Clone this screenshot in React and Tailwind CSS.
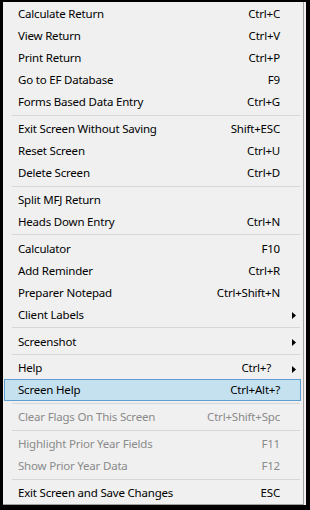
import React from "react";

const items = [
    { label: "Calculate Return", key: "Ctrl+C" },
    { label: "View Return", key: "Ctrl+V" },
    { label: "Print Return", key: "Ctrl+P" },
    { label: "Go to EF Database", key: "F9" },
    { label: "Forms Based Data Entry", key: "Ctrl+G" },
    { sep: true },
    { label: "Exit Screen Without Saving", key: "Shift+ESC" },
    { label: "Reset Screen", key: "Ctrl+U" },
    { label: "Delete Screen", key: "Ctrl+D" },
    { sep: true },
    { label: "Split MFJ Return", key: "" },
    { label: "Heads Down Entry", key: "Ctrl+N" },
    { sep: true },
    { label: "Calculator", key: "F10" },
    { label: "Add Reminder", key: "Ctrl+R" },
    { label: "Preparer Notepad", key: "Ctrl+Shift+N" },
    { label: "Client Labels", key: "", sub: true },
    { sep: true },
    { label: "Screenshot", key: "", sub: true },
    { sep: true },
    { label: "Help", key: "Ctrl+?", sub: true },
    { label: "Screen Help", key: "Ctrl+Alt+?", active: true },
    { sep: true },
    { label: "Clear Flags On This Screen", key: "Ctrl+Shift+Spc", disabled: true },
    { sep: true },
    { label: "Highlight Prior Year Fields", key: "F11", disabled: true },
    { label: "Show Prior Year Data", key: "F12", disabled: true },
    { sep: true },
    { label: "Exit Screen and Save Changes", key: "ESC" },
];

const Arrow = () => (
    <svg width="4" height="7" viewBox="0 0 4 7" className="absolute left-[287px] top-[8px]">
        <path d="M0 0 L4 3.5 L0 7 Z" fill="#000" />
    </svg>
);

const App = () => {
    return (
        <div className="w-[310px] h-[510px] bg-black pt-[2px] pl-[3px]" style={{ fontFamily: '"Noto Sans", "Open Sans", sans-serif' }}>
            <div className="w-[303px] h-[503px] bg-[#f0f0f0] flex">
                <div className="w-[301px] h-[503px] border-r border-b border-[#a0a0a0] pt-[1px] flex flex-col">
                    {items.map((item, i) =>
                        item.sep ? (
                            <div key={i} className="h-[5px] flex items-center pl-[9px] pr-[3px]">
                                <div className="h-px w-full bg-[#d7d7d7]" />
                            </div>
                        ) : (
                            <div
                                key={i}
                                className={
                                    "relative h-[22px] flex items-center justify-between text-[11.5px] tracking-[-0.2px] leading-none pl-[13px] pr-[20px] ml-px mr-[2px] " +
                                    (item.active ? "bg-[#c5e1ef] border border-[#5c9fd0] " : "border border-transparent ") +
                                    (item.disabled ? "text-[#8a8a8a]" : "text-black")
                                }
                            >
                                <span>{item.label}</span>
                                <span className={item.sub ? "mr-[9px]" : ""}>{item.key}</span>
                                {item.sub && <Arrow />}
                            </div>
                        )
                    )}
                </div>
            </div>
        </div>
    );
};

export default App;
